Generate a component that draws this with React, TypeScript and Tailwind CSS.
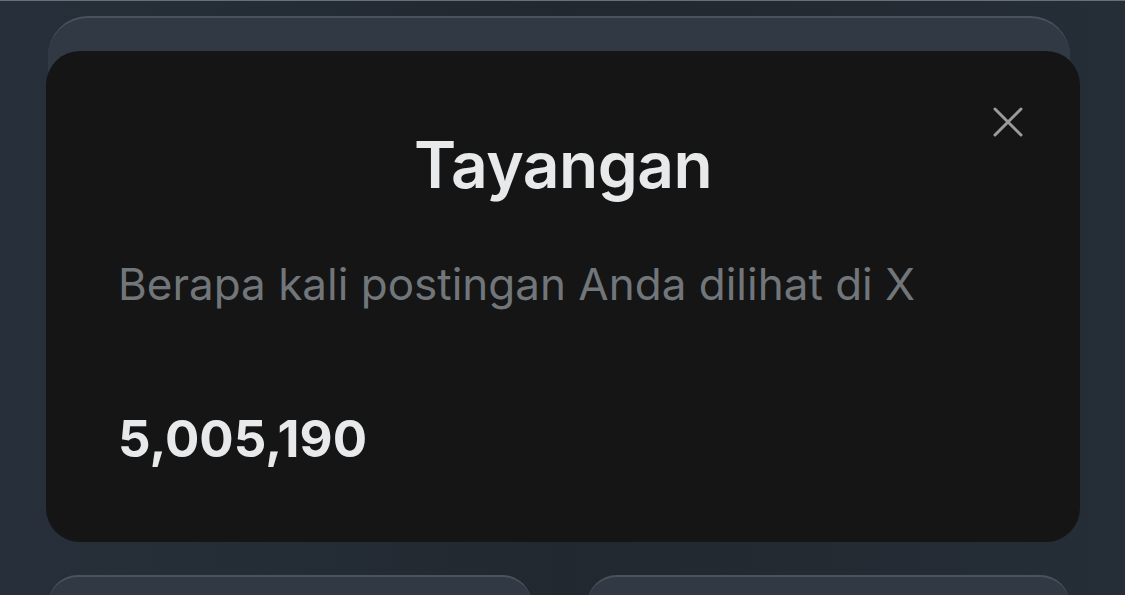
export default function App() {
  return (
    <div
      className="relative w-[1125px] h-[595px] overflow-hidden bg-gradient-to-r from-[#27303a] via-[#212830] to-[#252d36] border-t border-[#6a6f76]"
      style={{ fontFamily: 'Inter, "Noto Sans", sans-serif' }}
    >
      {/* page behind the sheet */}
      <div className="flex flex-col gap-[48px] pl-[48px] pr-[55px] pt-[15px]">
        <div className="h-[511px] rounded-[40px] bg-[#313945] border-t-2 border-[#4a525c]" />
        <div className="grid grid-cols-2 gap-[55px]">
          <div className="h-[60px] rounded-[38px] bg-[#313945] border-t-2 border-[#4a525c]" />
          <div className="h-[60px] rounded-[38px] bg-[#313945] border-t-2 border-[#4a525c]" />
        </div>
      </div>

      {/* views sheet */}
      <div className="absolute left-[46px] top-[50px] w-[1034px] h-[491px] rounded-[34px] bg-[#151515] px-[72px]">
        <button className="absolute right-[57px] top-[56px] text-[#9a9b9d]">
          <svg width="30" height="30" viewBox="0 0 30 30" fill="none" stroke="currentColor" strokeWidth="3" strokeLinecap="round">
            <path d="M2 2 L28 28 M28 2 L2 28" />
          </svg>
        </button>
        <h2 className="pt-[70px] text-center text-[64px] leading-[88px] font-semibold text-[#e7e9ea] tracking-[-0.5px]">
          Tayangan
        </h2>
        <p className="mt-[50px] text-[44px] leading-[50px] text-[#71767b]">
          Berapa kali postingan Anda dilihat di X
        </p>
        <div className="mt-[102px] text-[51px] leading-[56px] font-bold text-[#e7e9ea]">
          5,005,190
        </div>
      </div>
    </div>
  )
}
